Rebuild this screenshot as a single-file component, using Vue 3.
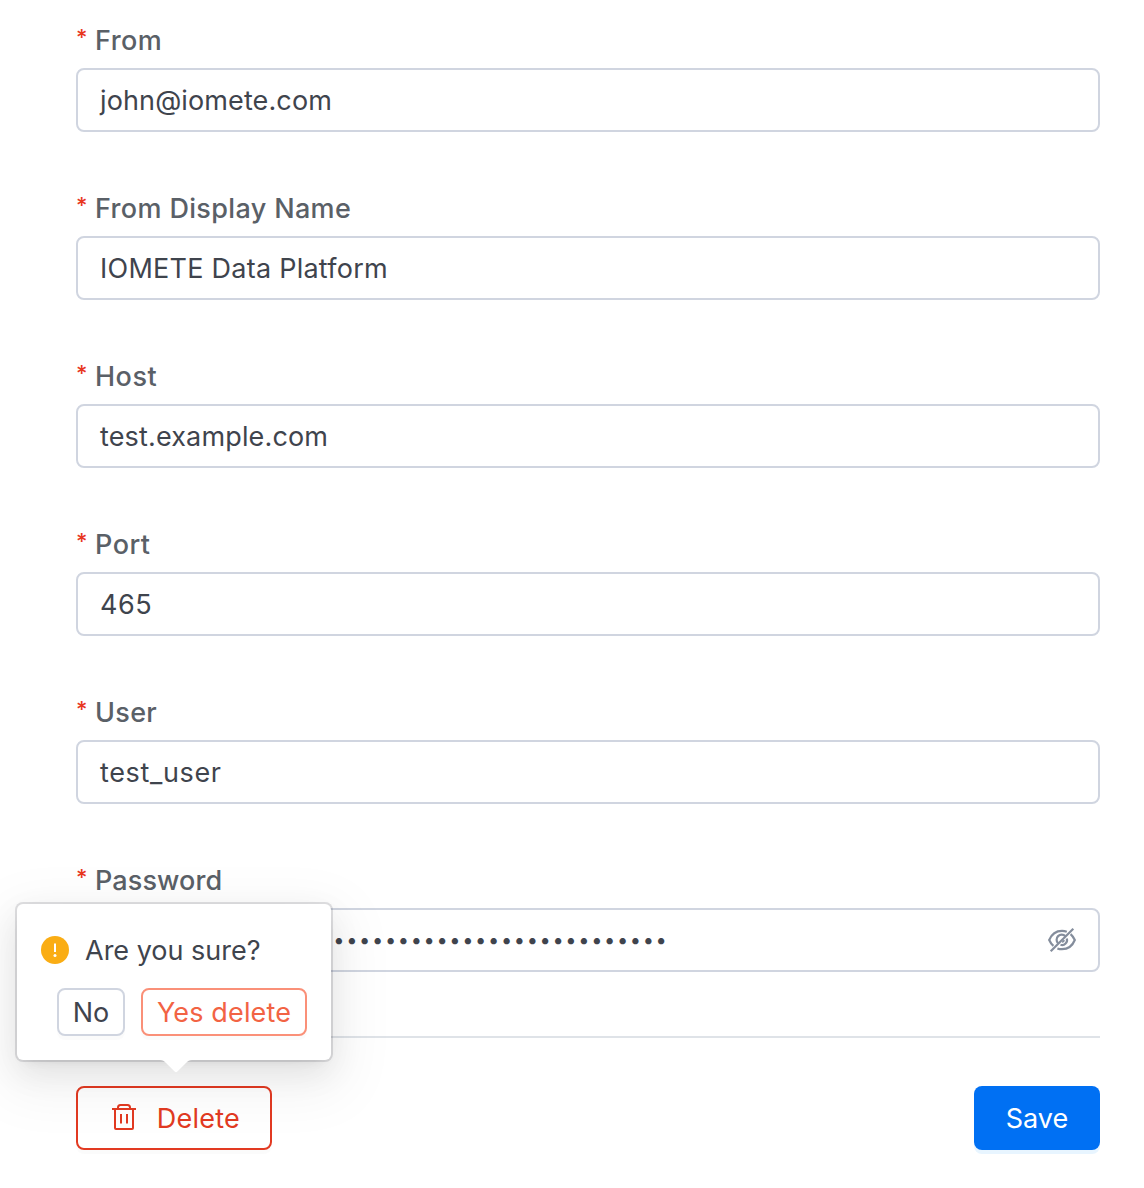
<script setup>
const fields = [
  { label: 'From', value: 'john@iomete.com', labelSpacing: 0.45, spacing: 0.12 },
  { label: 'From Display Name', value: 'IOMETE Data Platform', labelSpacing: 0.35, spacing: 0.25 },
  { label: 'Host', value: 'test.example.com', labelSpacing: 0.5, spacing: 0.15 },
  { label: 'Port', value: '465', labelSpacing: 0.5, spacing: 0.5 },
  { label: 'User', value: 'test_user', labelSpacing: 0.3, spacing: 0.65 },
  { label: 'Password', secret: 26, labelSpacing: 0.1 },
]
</script>

<template>
  <main class="page">
    <form class="form" @submit.prevent>
      <div v-for="f in fields" :key="f.label" class="field">
        <label class="label"><span class="star">*</span><span :style="{ letterSpacing: f.labelSpacing + 'px' }">{{ f.label }}</span></label>
        <div class="input">
          <span v-if="f.value" :style="{ letterSpacing: f.spacing + 'px' }">{{ f.value }}</span>
          <template v-else>
            <span class="dots"><span v-for="n in f.secret" :key="n" class="dot">•</span></span>
            <svg width="32" height="32" viewBox="0 0 32 32" fill="none" stroke="#848d9c" stroke-width="2.2">
              <path d="M20.800 7.700C19.300 7.100 17.700 6.800 16 6.800C10.200 6.800 5.500 10.300 3.200 16C4.300 18.500 5.600 20.300 7.400 21.900M11.400 24.400C12.900 25 14.400 25.200 16 25.200C21.800 25.200 26.500 21.700 28.800 16C27.700 13.500 26.400 11.700 24.600 10.100" />
              <path d="M19.300 12.100A5 5 0 0 0 12.100 19.300M14.500 20.800A5 5 0 0 0 20.800 14.500" />
              <path d="M16 18A2 2 0 0 0 18 16" stroke-width="1.500" />
              <path d="M4.700 27.300L27.300 4.700" />
            </svg>
          </template>
        </div>
      </div>
      <hr class="line" />
      <footer class="footer">
        <div class="anchor">
          <button class="btn delete" type="button">
            <svg width="28" height="28" viewBox="0 0 28 28" fill="none" stroke="#e23a22" stroke-width="2">
              <path d="M2 6H26M8 6V4.500Q8 2 10.500 2H17.500Q20 2 20 4.500V6M5 6V25Q5 26 6 26H22Q23 26 23 25V6M11 11V20.500M17 11V20.500" />
            </svg>
            <span>Delete</span>
          </button>
          <div class="popover">
            <div class="message">
              <svg width="28" height="28" viewBox="0 0 28 28">
                <circle cx="14" cy="14" r="14" fill="#faad14" />
                <path d="M13 7.500H15V16H13Z" fill="#fff" />
                <circle cx="14" cy="19.500" r="1.500" fill="#fff" />
              </svg>
              <span>Are you sure?</span>
            </div>
            <div class="actions">
              <button class="small" type="button">No</button>
              <button class="small danger" type="button">Yes delete</button>
            </div>
            <svg class="arrow" width="32" height="13" viewBox="0 0 32 13"><path d="M0 0H32C29 0 28 1 26.500 2.500L17.400 11.500Q16 12.800 14.600 11.500L5.500 2.500C4 1 3 0 0 0Z" fill="#fff" /></svg>
          </div>
        </div>
        <button class="btn save" type="submit">Save</button>
      </footer>
    </form>
  </main>
</template>

<style>
body { margin: 0; background: #fff; }
</style>

<style scoped>
.page {
  box-sizing: border-box;
  height: 1188px;
  padding: 20px 44px 0 76px;
  overflow: hidden;
  font-family: Inter, "Liberation Sans", sans-serif;
  font-size: 27px;
  color: #3f444d;
}
.form { display: flex; flex-direction: column; }
.field { height: 168px; }
.label { display: flex; height: 48px; line-height: 42px; font-weight: 500; color: #5a6067; }
.star { width: 19px; font-size: 22px; line-height: 35px; font-weight: 500; color: #e8371f; }
.input {
  box-sizing: border-box;
  display: flex;
  align-items: center;
  justify-content: space-between;
  height: 64px;
  padding: 0 20px 0 22px;
  border: 2px solid #d0d5e0;
  border-radius: 8px;
}
.dots { display: flex; margin-left: 232.500px; }
.dot { width: 12.900px; font-size: 20px; text-align: center; }
.line { width: 100%; height: 2px; margin: 8px 0 0; border: 0; background: #dfe3e8; }
.footer { display: flex; justify-content: space-between; margin-top: 48px; }
.anchor { position: relative; }
button { box-sizing: border-box; font: inherit; background: #fff; margin: 0; }
.btn { height: 64px; border-radius: 8px; display: flex; align-items: center; justify-content: center; }
.delete { width: 196px; padding: 0 30px 0 32px; justify-content: space-between; border: 2px solid #e23a22; color: #e23a22; box-shadow: 0 4px 0 rgba(0, 0, 0, .016); background: transparent; letter-spacing: .25px; }
.delete svg { margin-top: -2px; }
.save { width: 126px; border: 0; background: #0070f3; color: #fff; box-shadow: 0 4px 0 #e8f5ff; }
.popover {
  position: absolute;
  left: -59px;
  bottom: 90px;
  box-sizing: border-box;
  width: 314px;
  height: 156px;
  padding: 26px 24px 0;
  border-radius: 6px;
  background: #fff;
  box-shadow: 0 0 0 2px rgba(60, 60, 75, .16), 0 6px 12px -8px rgba(0, 0, 0, .12), 0 12px 32px rgba(0, 0, 0, .08), 0 18px 56px 16px rgba(0, 0, 0, .05);
}
.message { display: flex; align-items: center; gap: 16px; height: 40px; white-space: nowrap; }
.actions { display: flex; justify-content: flex-end; gap: 16px; margin-top: 18px; }
.small { width: 68px; height: 48px; padding: 0; border: 2px solid #d0d5e0; border-radius: 8px; color: inherit; box-shadow: 0 4px 0 rgba(0, 0, 0, .016); white-space: nowrap; }
.danger { width: 166px; border-color: #fa9078; color: #f26344; letter-spacing: .15px; }
.arrow { position: absolute; left: 143px; top: 156px; }
</style>
